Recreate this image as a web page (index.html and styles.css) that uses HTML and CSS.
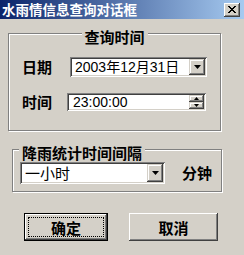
FILE: index.html
```html
<!DOCTYPE html>
<html>
<head>
<meta charset="utf-8">
<link rel="stylesheet" href="styles.css">
</head>
<body>
<div class="window">
  <div class="titlebar">
    <span class="title">水雨情信息查询对话框</span>
    <span class="close"><svg width="8" height="7" viewBox="0 0 8 7"><path d="M0 0h2v1h1v1h2v-1h1v-1h2v1h-1v1h-1v1h-1v1h1v1h1v1h1v1h-2v-1h-1v-1h-2v1h-1v1h-2v-1h1v-1h1v-1h1v-1h-1v-1h-1v-1h-1z" fill="#000"/></svg></span>
  </div>

  <div class="group g1">
    <span class="legend legend-center">查询时间</span>
    <div class="row row-date">
      <span class="lbl">日期</span>
      <div class="combo combo-date">
        <span class="val">2003年12月31日</span>
        <span class="ddbtn"><svg width="7" height="4" viewBox="0 0 7 4"><path d="M0 0h7l-3.5 4z" fill="#000"/></svg></span>
      </div>
    </div>
    <div class="row row-time">
      <span class="lbl">时间</span>
      <div class="field field-time">
        <span class="val val-time">23:00:00</span>
        <span class="spin">
          <span class="sbtn"><svg width="5" height="3" viewBox="0 0 5 3"><path d="M2.5 0L5 3H0z" fill="#000"/></svg></span>
          <span class="sbtn"><svg width="5" height="3" viewBox="0 0 5 3"><path d="M0 0h5L2.5 3z" fill="#000"/></svg></span>
        </span>
      </div>
    </div>
  </div>

  <div class="group g2">
    <span class="legend legend-left">降雨统计时间间隔</span>
    <div class="row row-interval">
      <div class="combo combo-interval">
        <span class="val">一小时</span>
        <span class="ddbtn ddbtn-tall"><svg width="7" height="4" viewBox="0 0 7 4"><path d="M0 0h7l-3.5 4z" fill="#000"/></svg></span>
      </div>
      <span class="unit">分钟</span>
    </div>
  </div>

  <div class="buttons">
    <button class="btn btn-default">确定</button>
    <button class="btn btn-cancel">取消</button>
  </div>
</div>
</body>
</html>
```

FILE: styles.css
```css
* {
  box-sizing: border-box;
  margin: 0;
  padding: 0;
}

body {
  margin: 0;
  background: #d4d0c8;
  font-family: "Noto Sans CJK SC", sans-serif;
}

.window {
  width: 244px;
  height: 255px;
  background: #d4d0c8;
  overflow: hidden;
  display: flex;
  flex-direction: column;
}

.titlebar {
  height: 19px;
  flex: none;
  background: linear-gradient(to right, #0a246a, #a6caf0);
  display: flex;
  align-items: center;
  padding-left: 2px;
  padding-right: 4px;
}

.title {
  flex: 1;
  color: #fff;
  font-weight: bold;
  font-size: 13.5px;
  line-height: 19px;
  white-space: nowrap;
}

.close {
  width: 16px;
  height: 14px;
  background: #d4d0c8;
  box-shadow: inset -1px -1px #404040, inset 1px 1px #fff, inset -2px -2px #808080;
  display: flex;
  align-items: center;
  justify-content: center;
}

.group {
  position: relative;
  border: 1px solid #808080;
  box-shadow: 1px 1px 0 #fff, inset 1px 1px 0 #fff;
  flex: none;
}

.g1 {
  margin: 14px 0 0 8px;
  width: 213px;
  height: 98px;
  padding-top: 23px;
}

.g2 {
  margin: 18px 0 0 12px;
  width: 210px;
  height: 43px;
  padding-top: 12px;
}

.legend {
  position: absolute;
  top: -6px;
  background: #d4d0c8;
  font-size: 15px;
  font-weight: bold;
  line-height: 18px;
  color: #000;
  padding: 0 3px;
  white-space: nowrap;
}

.legend-center {
  left: 50%;
  transform: translateX(-50%);
}

.legend-left {
  left: 6px;
}

.row {
  display: flex;
  align-items: center;
}

.row-date {
  padding-left: 13px;
  height: 20px;
}

.row-time {
  padding-left: 13px;
  height: 18px;
  margin-top: 16px;
}

.row-interval {
  padding-left: 7px;
  height: 22px;
}

.lbl {
  width: 45px;
  font-size: 15px;
  font-weight: bold;
  line-height: 18px;
  color: #000;
}

.combo,
.field {
  background: #fff;
  box-shadow: inset 1px 1px #808080, inset -1px -1px #fff, inset 2px 2px #404040, inset -2px -2px #d4d0c8;
  display: flex;
  align-items: center;
  padding: 2px;
}

.combo-date {
  margin-left: 3px;
  width: 137px;
  height: 20px;
}

.field-time {
  width: 139px;
  height: 18px;
}

.combo-interval {
  width: 145px;
  height: 22px;
}

.val {
  font-family: "Liberation Sans", "Noto Sans CJK SC", sans-serif;
  font-size: 14px;
  line-height: 16px;
  color: #000;
  padding-left: 3px;
  white-space: nowrap;
}

.val-time {
  padding-left: 4px;
}

.combo-interval .val {
  font-family: "Noto Sans CJK SC", sans-serif;
  font-size: 15px;
}

.ddbtn {
  margin-left: auto;
  width: 16px;
  height: 16px;
  background: #d4d0c8;
  box-shadow: inset -1px -1px #404040, inset 1px 1px #d4d0c8, inset -2px -2px #808080, inset 2px 2px #fff;
  display: flex;
  align-items: center;
  justify-content: center;
}

.ddbtn-tall {
  height: 18px;
}

.spin {
  margin-left: auto;
  width: 15px;
  height: 14px;
  display: flex;
  flex-direction: column;
}

.sbtn {
  flex: 1;
  background: #d4d0c8;
  box-shadow: inset -1px -1px #404040, inset 1px 1px #d4d0c8, inset -2px -2px #808080, inset 2px 2px #fff;
  display: flex;
  align-items: center;
  justify-content: center;
}

.unit {
  margin-left: 17px;
  font-size: 15px;
  font-weight: bold;
  line-height: 18px;
  color: #000;
}

.buttons {
  display: flex;
  margin-top: 21px;
  padding-left: 24px;
}

.btn {
  height: 28px;
  background: #d4d0c8;
  border: none;
  font-family: "Noto Sans CJK SC", sans-serif;
  font-size: 15px;
  font-weight: bold;
  color: #000;
  box-shadow: inset -1px -1px #404040, inset 1px 1px #fff, inset -2px -2px #808080;
  position: relative;
}

.btn-default {
  width: 84px;
  border: 1px solid #000;
}

.btn-default::after {
  content: "";
  position: absolute;
  left: 3px;
  top: 3px;
  right: 3px;
  bottom: 3px;
  border: 1px dotted #000;
}

.btn-cancel {
  width: 89px;
  margin-left: 21px;
}
```
